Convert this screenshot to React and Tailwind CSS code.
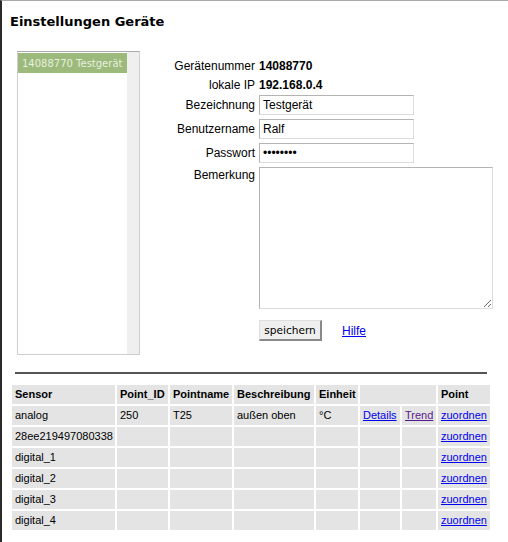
import React from 'react';

const sans = { fontFamily: '"Liberation Sans", Arial, sans-serif' };

const rows = [
    { sensor: 'analog', id: '250', name: 'T25', desc: 'außen oben', unit: '°C', links: true },
    { sensor: '28ee219497080338' },
    { sensor: 'digital_1' },
    { sensor: 'digital_2' },
    { sensor: 'digital_3' },
    { sensor: 'digital_4' },
];

const inputCls =
    'w-[155px] h-[20px] px-[3px] text-[12px] text-black bg-white border border-[#dcdcdc] border-t-[#b4b4b4] border-l-[#b4b4b4] outline-none';

const App = () => {
    return (
        <div className="w-[508px] h-[542px] bg-white border-l-2 border-l-[#2b2b2b] border-t border-t-[#a8a8a8] overflow-hidden">
            {/* Title */}
            <div className="pl-[8px] pt-[13px] h-[29px] text-[13px] leading-[16px] font-bold text-black font-['DejaVu_Sans',sans-serif]">
                Einstellungen Geräte
            </div>

            <div className="flex items-start mt-[21px]">
                {/* Device list */}
                <div className="ml-[15px] w-[123px] h-[304px] flex border border-[#cfcfcf] border-t-[#a9a9a9] bg-white">
                    <div className="flex-1 min-w-0 pt-px">
                        <div className="h-[20px] pl-[4px] flex items-center bg-[#9bba7b] text-[#e8efdf] text-[10px] font-['DejaVu_Sans',sans-serif] whitespace-nowrap overflow-hidden">
                            14088770 Testgerät
                        </div>
                    </div>
                    <div className="w-[12px] bg-[#efefef]" />
                </div>

                {/* Form */}
                <div className="ml-[10px] mt-[5px] flex flex-col text-[12px] text-black" style={sans}>
                    <div className="flex h-[19px] items-center">
                        <span className="w-[105px] text-right">Gerätenummer</span>
                        <span className="ml-[4px] font-bold">14088770</span>
                    </div>
                    <div className="flex h-[19px] items-center">
                        <span className="w-[105px] text-right">lokale IP</span>
                        <span className="ml-[4px] font-bold">192.168.0.4</span>
                    </div>
                    <div className="flex items-center mt-[1px]">
                        <span className="w-[105px] text-right">Bezeichnung</span>
                        <input className={`ml-[4px] ${inputCls}`} style={sans} defaultValue="Testgerät" readOnly />
                    </div>
                    <div className="flex items-center mt-[4px]">
                        <span className="w-[105px] text-right">Benutzername</span>
                        <input className={`ml-[4px] ${inputCls}`} style={sans} defaultValue="Ralf" readOnly />
                    </div>
                    <div className="flex items-center mt-[4px]">
                        <span className="w-[105px] text-right">Passwort</span>
                        <input type="password" className={`ml-[4px] ${inputCls}`} style={sans} defaultValue="12345678" readOnly />
                    </div>
                    <div className="flex items-start mt-[4px]">
                        <span className="w-[105px] text-right leading-[14px] pt-px">Bemerkung</span>
                        <textarea
                            className="ml-[4px] w-[234px] h-[142px] block border border-[#dcdcdc] border-t-[#b4b4b4] border-l-[#b4b4b4] bg-white outline-none"
                            readOnly
                        />
                    </div>
                    <div className="flex items-center mt-[11px] ml-[109px]">
                        <button className="w-[63px] h-[21px] bg-[#efefef] border border-t-[#dedede] border-l-[#dedede] border-r-2 border-b-2 border-r-[#8a8a8a] border-b-[#8a8a8a] text-[10.6px] text-black font-['DejaVu_Sans',sans-serif] leading-none">
                            speichern
                        </button>
                        <a href="#" className="ml-[20px] text-[#0000ee] underline">Hilfe</a>
                    </div>
                </div>
            </div>

            {/* Divider */}
            <div className="ml-[13px] mt-[17px] w-[472px] h-[2px] bg-[#555]" />

            {/* Sensor table */}
            <table
                className="ml-[8px] mt-[9px] table-fixed border-separate border-spacing-[2px] w-[482px] text-[11px] text-black"
                style={sans}
            >
                <colgroup>
                    <col className="w-[103px]" />
                    <col className="w-[51px]" />
                    <col className="w-[62px]" />
                    <col className="w-[80px]" />
                    <col className="w-[42px]" />
                    <col className="w-[40px]" />
                    <col className="w-[34px]" />
                    <col className="w-[52px]" />
                </colgroup>
                <thead>
                    <tr className="h-[19px]">
                        <th className="bg-[#e4e4e4] px-[3px] p-0 text-left font-bold">Sensor</th>
                        <th className="bg-[#e4e4e4] px-[3px] p-0 text-left font-bold">Point_ID</th>
                        <th className="bg-[#e4e4e4] px-[3px] p-0 text-left font-bold">Pointname</th>
                        <th className="bg-[#e4e4e4] px-[3px] p-0 text-left font-bold">Beschreibung</th>
                        <th className="bg-[#e4e4e4] px-[3px] p-0 text-left font-bold">Einheit</th>
                        <th colSpan={2} className="bg-[#e4e4e4] px-[3px] p-0" />
                        <th className="bg-[#e4e4e4] px-[3px] p-0 text-left font-bold">Point</th>
                    </tr>
                </thead>
                <tbody>
                    {rows.map((r) => (
                        <tr key={r.sensor} className="h-[19px]">
                            <td className="bg-[#e4e4e4] px-[3px] p-0 whitespace-nowrap">{r.sensor}</td>
                            <td className="bg-[#e4e4e4] px-[3px] p-0">{r.id}</td>
                            <td className="bg-[#e4e4e4] px-[3px] p-0">{r.name}</td>
                            <td className="bg-[#e4e4e4] px-[3px] p-0 whitespace-nowrap">{r.desc}</td>
                            <td className="bg-[#e4e4e4] px-[3px] p-0">{r.unit}</td>
                            <td className="bg-[#e4e4e4] px-[3px] p-0">
                                {r.links && <a href="#" className="text-[#0000ee] underline">Details</a>}
                            </td>
                            <td className="bg-[#e4e4e4] px-[3px] p-0">
                                {r.links && <a href="#" className="text-[#551a8b] underline">Trend</a>}
                            </td>
                            <td className="bg-[#e4e4e4] px-[3px] p-0">
                                <a href="#" className="text-[#0000ee] underline">zuordnen</a>
                            </td>
                        </tr>
                    ))}
                </tbody>
            </table>
        </div>
    );
};

export default App;
